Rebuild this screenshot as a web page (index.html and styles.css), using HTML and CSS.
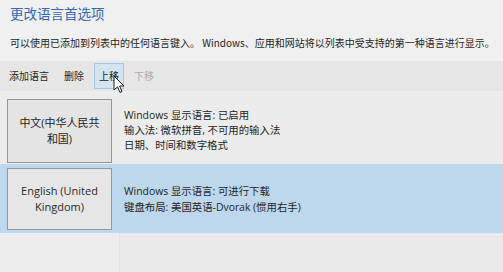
FILE: index.html
```html
<!DOCTYPE html>
<html lang="zh-CN">
<head>
<meta charset="utf-8">
<link rel="stylesheet" href="styles.css">
</head>
<body>
<div class="page">
  <h1 class="title">更改语言首选项</h1>
  <p class="desc">可以使用已添加到列表中的任何语言键入。 Windows、应用和网站将以列表中受支持的第一种语言进行显示。</p>
  <div class="toolbar">
    <span class="tool">添加语言</span>
    <span class="tool">删除</span>
    <span class="tool hover">上移</span>
    <span class="tool disabled">下移</span>
    <svg class="cursor" width="12" height="19" viewBox="0 0 12 19"><path d="M1 1 L1 15 L4.5 11.8 L7 17.5 L9 16.6 L6.6 11 L11 11 Z" fill="#fff" stroke="#222" stroke-width="1" stroke-linejoin="round"/></svg>
  </div>
  <div class="list">
    <div class="row row-1">
      <div class="lang-btn">中文(中华人民共<br>和国)</div>
      <div class="info">
        <div>Windows 显示语言: 已启用</div>
        <div>输入法: 微软拼音, 不可用的输入法</div>
        <div>日期、时间和数字格式</div>
      </div>
    </div>
    <div class="row row-2 selected">
      <div class="lang-btn">English (United<br>Kingdom)</div>
      <div class="info">
        <div>Windows 显示语言: 可进行下载</div>
        <div>键盘布局: 美国英语-Dvorak (惯用右手)</div>
      </div>
    </div>
    <div class="rest">
      <div class="rest-left"></div>
      <div class="rest-right"></div>
    </div>
  </div>
</div>
</body>
</html>
```
FILE: styles.css
```css
html, body {
  margin: 0;
  padding: 0;
  width: 503px;
  height: 272px;
  overflow: hidden;
  background: #f0f0f0;
  font-family: "Open Sans", "Noto Sans CJK SC", sans-serif;
  color: #1f1f1f;
}
.page {
  display: flex;
  flex-direction: column;
  height: 272px;
}
.title {
  margin: 0;
  padding: 3px 0 0 10px;
  height: 25px;
  font-size: 13.5px;
  font-weight: normal;
  line-height: 20px;
  color: #3566b3;
  font-family: "Noto Sans CJK SC", sans-serif;
}
.desc {
  margin: 0;
  padding: 7px 0 0 10px;
  height: 26px;
  font-size: 10px;
  line-height: 15px;
  white-space: nowrap;
  font-family: "Noto Sans CJK SC", sans-serif;
}
.toolbar {
  position: relative;
  display: flex;
  align-items: center;
  gap: 5px;
  height: 30px;
  padding-left: 4px;
  background: #e6e6e6;
  font-family: "Noto Sans CJK SC", sans-serif;
  font-size: 10px;
}
.tool {
  height: 24px;
  line-height: 24px;
  padding: 0 4px;
  border: 1px solid transparent;
}
.tool.hover {
  background: #d5e4f1;
  border-color: #a9c6df;
}
.tool.disabled {
  color: #ababab;
}
.cursor {
  position: absolute;
  left: 113px;
  top: 14px;
}
.list {
  display: flex;
  flex-direction: column;
  flex: 1;
}
.row {
  display: flex;
  align-items: center;
  gap: 12px;
  padding-left: 7px;
}
.row-1 {
  height: 72px;
  background: #ececec;
  border-top: 1px solid #ececec;
}
.row-2 {
  height: 69px;
  background: #bdd7ec;
}
.lang-btn {
  box-sizing: border-box;
  width: 105px;
  display: flex;
  align-items: center;
  justify-content: center;
  text-align: center;
  background: #e4e4e4;
  border: 1px solid #979797;
  font-size: 11px;
  line-height: 16px;
}
.row-1 .lang-btn {
  height: 64px;
  margin-top: 5px;
}
.row-2 .lang-btn {
  height: 62px;
  background: #e6e6e6;
  color: #2a2a2a;
}
.info {
  font-size: 10.4px;
  line-height: 15px;
  padding-top: 5px;
}
.row-2 .info {
  line-height: 16px;
  padding-top: 0;
}
.rest {
  flex: 1;
  display: flex;
}
.rest-left {
  width: 119px;
  background: #ededed;
  border-right: 1px solid #e3e3e3;
}
.rest-right {
  flex: 1;
  background: #eaeaea;
}
```
